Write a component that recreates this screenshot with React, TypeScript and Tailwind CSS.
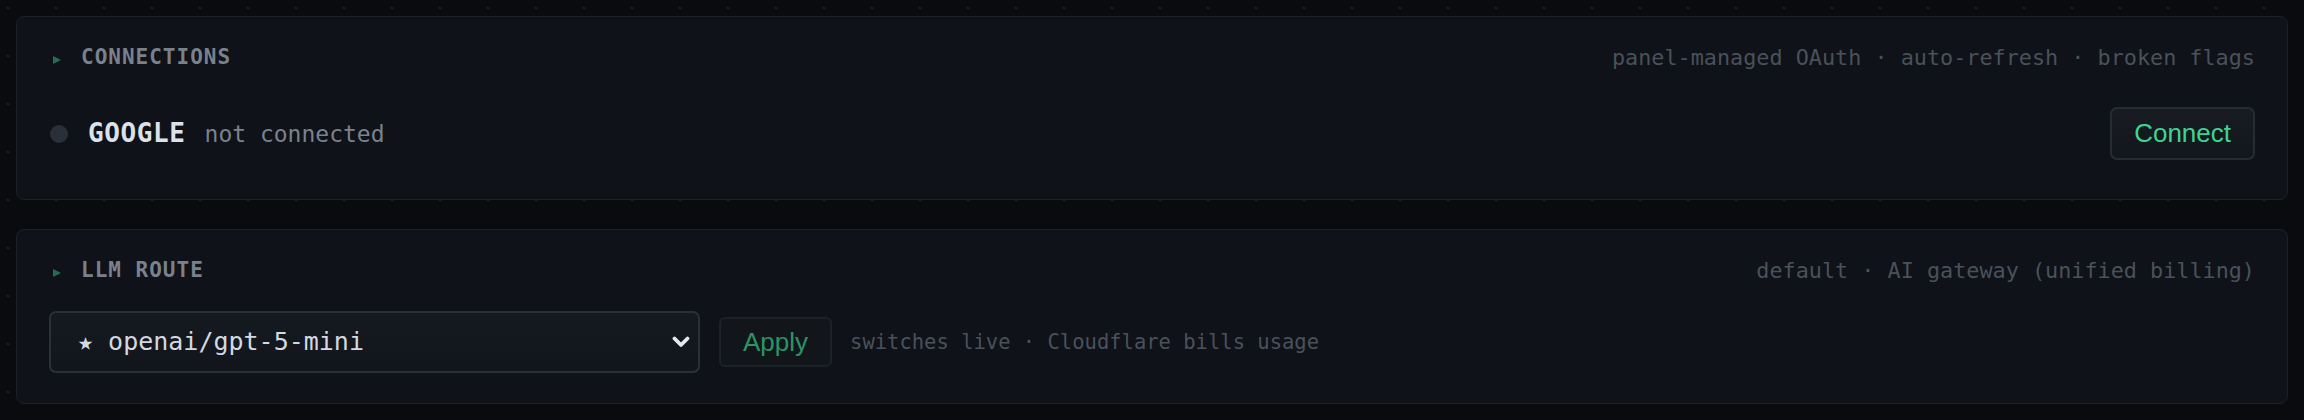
import type { ReactNode } from "react"

const mono = "font-['DejaVu_Sans_Mono',monospace]"
const sans = "font-['Liberation_Sans',Arial,sans-serif]"

function Caret() {
  return (
    <svg width="8" height="8" viewBox="0 0 8 8" className="ml-[4px] mt-[4px] shrink-0">
      <polygon points="0,0 8,4 0,8" fill="#2b8c68" opacity="0.75" />
    </svg>
  )
}

function Chevron() {
  return (
    <svg width="18" height="12" viewBox="0 0 18 12" className="shrink-0">
      <path d="M2.5 2.5 L9 9 L15.5 2.5" fill="none" stroke="#e6e9ee" strokeWidth="3.8" strokeLinecap="round" strokeLinejoin="round" />
    </svg>
  )
}

function Panel({ title, meta, children }: { title: string; meta: string; children: ReactNode }) {
  return (
    <section className="rounded-[8px] border border-[#1c2129] bg-[#0f1218] px-[32px] pt-[26px] pb-[30px]">
      <div className="flex h-[30px] items-center justify-between">
        <div className="flex items-center gap-[20px]">
          <Caret />
          <span className="text-[21px] font-bold tracking-[1px] text-[#79818c]">{title}</span>
        </div>
        <span className="text-[21.8px] text-[#49515b]">{meta}</span>
      </div>
      {children}
    </section>
  )
}

export default function App() {
  return (
    <div
      className={`${mono} flex min-h-[420px] w-full flex-col gap-[29px] bg-[#0a0b0e] bg-[radial-gradient(circle_at_8px_8px,#15181d_1.5px,transparent_2.1px)] bg-size-[48px_48px] p-4`}
    >
      <Panel title="CONNECTIONS" meta="panel-managed OAuth · auto-refresh · broken flags">
        <div className="mt-[25px] flex h-[71px] items-center justify-between">
          <div className="flex items-center">
            <span className="ml-px h-[18px] w-[18px] rounded-full bg-[#29303a]" />
            <div className="ml-[20px] flex items-baseline gap-[19px]">
              <span className="text-[26px] font-bold tracking-[0.6px] text-[#dce2ea]">GOOGLE</span>
              <span className="text-[23px] text-[#7a828d]">not connected</span>
            </div>
          </div>
          <button
            className={`${sans} h-[53px] rounded-[7px] border-2 border-[#262c35] bg-linear-to-b from-[#181c22] to-[#13171c] px-[22px] text-[26px] text-[#3dd493]`}
          >
            Connect
          </button>
        </div>
      </Panel>

      <Panel title="LLM ROUTE" meta="default · AI gateway (unified billing)">
        <div className="mt-[25px] flex items-center">
          <div className="flex h-[62px] w-[651px] items-center justify-between rounded-[7px] border-2 border-[#29303a] bg-linear-to-b from-[#151920] to-[#12161c] pl-[27px] pr-[8px]">
            <span className="text-[25px] text-[#d3d9e1]">★ openai/gpt-5-mini</span>
            <Chevron />
          </div>
          <button
            className={`${sans} ml-[19px] h-[50px] rounded-[6px] border-2 border-[#1d2229] bg-[#12161b] px-[22px] text-[26px] text-[#2b9466]`}
          >
            Apply
          </button>
          <span className="ml-[18px] text-[20.5px] text-[#49515b]">switches live · Cloudflare bills usage</span>
        </div>
      </Panel>
    </div>
  )
}
